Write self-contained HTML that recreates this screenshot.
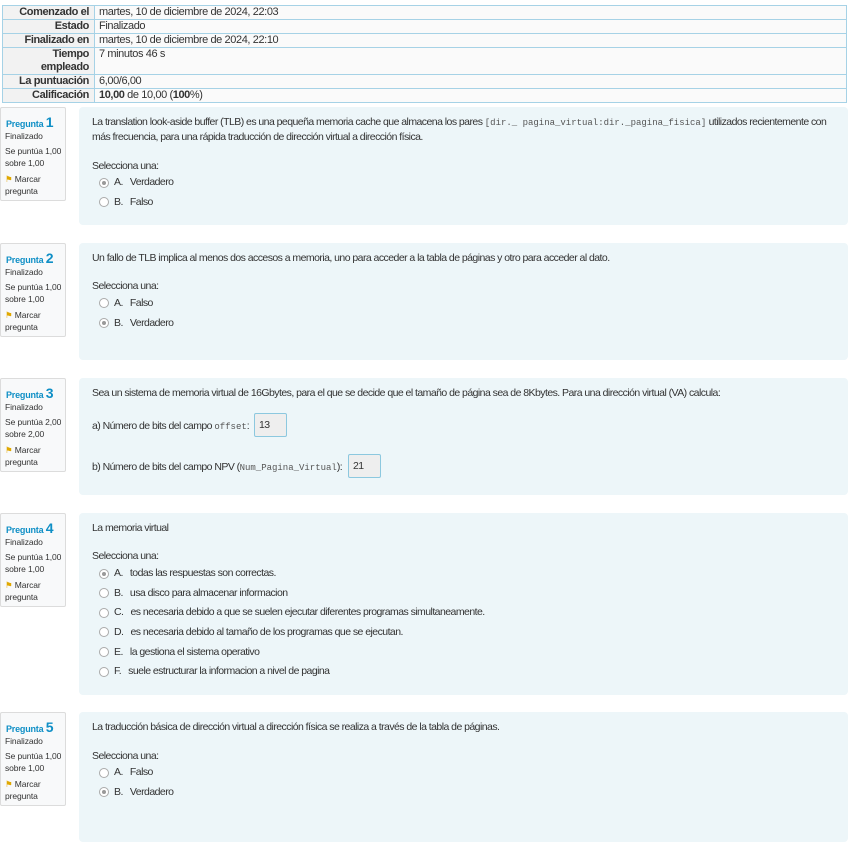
<!DOCTYPE html>
<html><head><meta charset="utf-8"><style>
*{margin:0;padding:0;box-sizing:border-box}
body{width:848px;height:822px;overflow:hidden;background:#fff;font-family:"Liberation Sans",sans-serif;font-size:10.5px;color:#333;letter-spacing:-0.55px;position:relative}
.a{position:absolute;white-space:nowrap;line-height:14px}
table{position:absolute;left:2px;top:5px;width:845px;border-collapse:collapse}
td{border:1px solid #a6d2e6;height:14px;line-height:13px;padding:0 4px;vertical-align:top;font-size:11px;letter-spacing:-0.4px}
td.l{width:92px;text-align:right;font-weight:bold;background:#f2f2f2;color:#333;padding-right:5px}
td.v{background:#fafafa}
.info{position:absolute;left:0;width:66px;height:94px;border:1px solid #dcdcdc;background:#f8f9fa;border-radius:2px}
.info .t{position:absolute;left:5px;top:6px;color:#0f8fc6;font-weight:bold;font-size:9px;letter-spacing:-0.2px}
.info .t b{font-size:14px}
.info .s{position:absolute;left:4px;font-size:8.5px;line-height:12px;color:#333;letter-spacing:-0.1px}
.box{position:absolute;left:79px;width:769px;background:#edf6f9;border-radius:4px}
.m{font-family:"Liberation Mono",monospace;font-size:9px;letter-spacing:0;color:#555}
.r{position:absolute;width:10px;height:10px;border:1px solid #aaa;border-radius:50%;background:#fff;left:99px}
.r.c::after{content:"";position:absolute;left:2px;top:2px;width:4px;height:4px;border-radius:50%;background:#999}
.in{position:absolute;height:24px;border:1px solid #8cc8df;background:#eee;border-radius:2px;padding:5px 4px;line-height:12px}
</style></head><body>
<table>
<tr><td class="l">Comenzado el</td><td class="v">martes, 10 de diciembre de 2024, 22:03</td></tr>
<tr><td class="l">Estado</td><td class="v">Finalizado</td></tr>
<tr><td class="l">Finalizado en</td><td class="v">martes, 10 de diciembre de 2024, 22:10</td></tr>
<tr><td class="l" style="height:26px">Tiempo<br>empleado</td><td class="v">7 minutos 46 s</td></tr>
<tr><td class="l">La puntuación</td><td class="v">6,00/6,00</td></tr>
<tr><td class="l">Calificación</td><td class="v"><b>10,00</b> de 10,00 (<b>100</b>%)</td></tr>
</table>

<!-- Q1 -->
<div class="info" style="top:107px"><div class="t">Pregunta <b>1</b></div><div class="s" style="top:22px">Finalizado</div><div class="s" style="top:37px">Se puntúa 1,00<br>sobre 1,00</div><div class="s" style="top:65px"><span style="color:#e0a800">&#9873;</span> Marcar<br>pregunta</div></div>
<div class="box" style="top:107px;height:118px"></div>
<div class="a" style="left:92px;top:115px">La translation look-aside buffer (TLB) es una pequeña memoria cache que almacena los pares <span class="m">[dir._ pagina_virtual:dir._pagina_fisica]</span> utilizados recientemente con</div>
<div class="a" style="left:92px;top:130px">más frecuencia, para una rápida traducción de dirección virtual a dirección física.</div>
<div class="a" style="left:92px;top:159px">Selecciona una:</div>
<div class="r c" style="top:178px"></div><div class="a" style="left:114px;top:175px">A.&nbsp;&nbsp; Verdadero</div>
<div class="r" style="top:197px"></div><div class="a" style="left:114px;top:195px">B.&nbsp;&nbsp; Falso</div>

<!-- Q2 -->
<div class="info" style="top:243px"><div class="t">Pregunta <b>2</b></div><div class="s" style="top:22px">Finalizado</div><div class="s" style="top:37px">Se puntúa 1,00<br>sobre 1,00</div><div class="s" style="top:65px"><span style="color:#e0a800">&#9873;</span> Marcar<br>pregunta</div></div>
<div class="box" style="top:243px;height:117px"></div>
<div class="a" style="left:92px;top:251px">Un fallo de TLB implica al menos dos accesos a memoria, uno para acceder a la tabla de páginas y otro para acceder al dato.</div>
<div class="a" style="left:92px;top:279px">Selecciona una:</div>
<div class="r" style="top:298px"></div><div class="a" style="left:114px;top:296px">A.&nbsp;&nbsp; Falso</div>
<div class="r c" style="top:318px"></div><div class="a" style="left:114px;top:316px">B.&nbsp;&nbsp; Verdadero</div>

<!-- Q3 -->
<div class="info" style="top:378px"><div class="t">Pregunta <b>3</b></div><div class="s" style="top:22px">Finalizado</div><div class="s" style="top:37px">Se puntúa 2,00<br>sobre 2,00</div><div class="s" style="top:65px"><span style="color:#e0a800">&#9873;</span> Marcar<br>pregunta</div></div>
<div class="box" style="top:378px;height:117px"></div>
<div class="a" style="left:92px;top:386px">Sea un sistema de memoria virtual de 16Gbytes, para el que se decide que el tamaño de página sea de 8Kbytes. Para una dirección virtual (VA) calcula:</div>
<div class="a" style="left:92px;top:419px">a) Número de bits del campo <span class="m">offset</span>:</div>
<div class="in" style="left:254px;top:413px;width:33px">13</div>
<div class="a" style="left:92px;top:460px">b) Número de bits del campo NPV (<span class="m">Num_Pagina_Virtual</span>):</div>
<div class="in" style="left:348px;top:454px;width:33px">21</div>

<!-- Q4 -->
<div class="info" style="top:513px"><div class="t">Pregunta <b>4</b></div><div class="s" style="top:22px">Finalizado</div><div class="s" style="top:37px">Se puntúa 1,00<br>sobre 1,00</div><div class="s" style="top:65px"><span style="color:#e0a800">&#9873;</span> Marcar<br>pregunta</div></div>
<div class="box" style="top:513px;height:182px"></div>
<div class="a" style="left:92px;top:521px">La memoria virtual</div>
<div class="a" style="left:92px;top:549px">Selecciona una:</div>
<div class="r c" style="top:569px"></div><div class="a" style="left:114px;top:566px">A.&nbsp;&nbsp; todas las respuestas son correctas.</div>
<div class="r" style="top:588px"></div><div class="a" style="left:114px;top:586px">B.&nbsp;&nbsp; usa disco para almacenar informacion</div>
<div class="r" style="top:608px"></div><div class="a" style="left:114px;top:605px">C.&nbsp;&nbsp; es necesaria debido a que se suelen ejecutar diferentes programas simultaneamente.</div>
<div class="r" style="top:627px"></div><div class="a" style="left:114px;top:625px">D.&nbsp;&nbsp; es necesaria debido al tamaño de los programas que se ejecutan.</div>
<div class="r" style="top:647px"></div><div class="a" style="left:114px;top:645px">E.&nbsp;&nbsp; la gestiona el sistema operativo</div>
<div class="r" style="top:667px"></div><div class="a" style="left:114px;top:664px">F.&nbsp;&nbsp; suele estructurar la informacion a nivel de pagina</div>

<!-- Q5 -->
<div class="info" style="top:712px"><div class="t">Pregunta <b>5</b></div><div class="s" style="top:22px">Finalizado</div><div class="s" style="top:37px">Se puntúa 1,00<br>sobre 1,00</div><div class="s" style="top:65px"><span style="color:#e0a800">&#9873;</span> Marcar<br>pregunta</div></div>
<div class="box" style="top:712px;height:130px"></div>
<div class="a" style="left:92px;top:720px">La traducción básica de dirección virtual a dirección física se realiza a través de la tabla de páginas.</div>
<div class="a" style="left:92px;top:749px">Selecciona una:</div>
<div class="r" style="top:768px"></div><div class="a" style="left:114px;top:765px">A.&nbsp;&nbsp; Falso</div>
<div class="r c" style="top:787px"></div><div class="a" style="left:114px;top:785px">B.&nbsp;&nbsp; Verdadero</div>
</body></html>
